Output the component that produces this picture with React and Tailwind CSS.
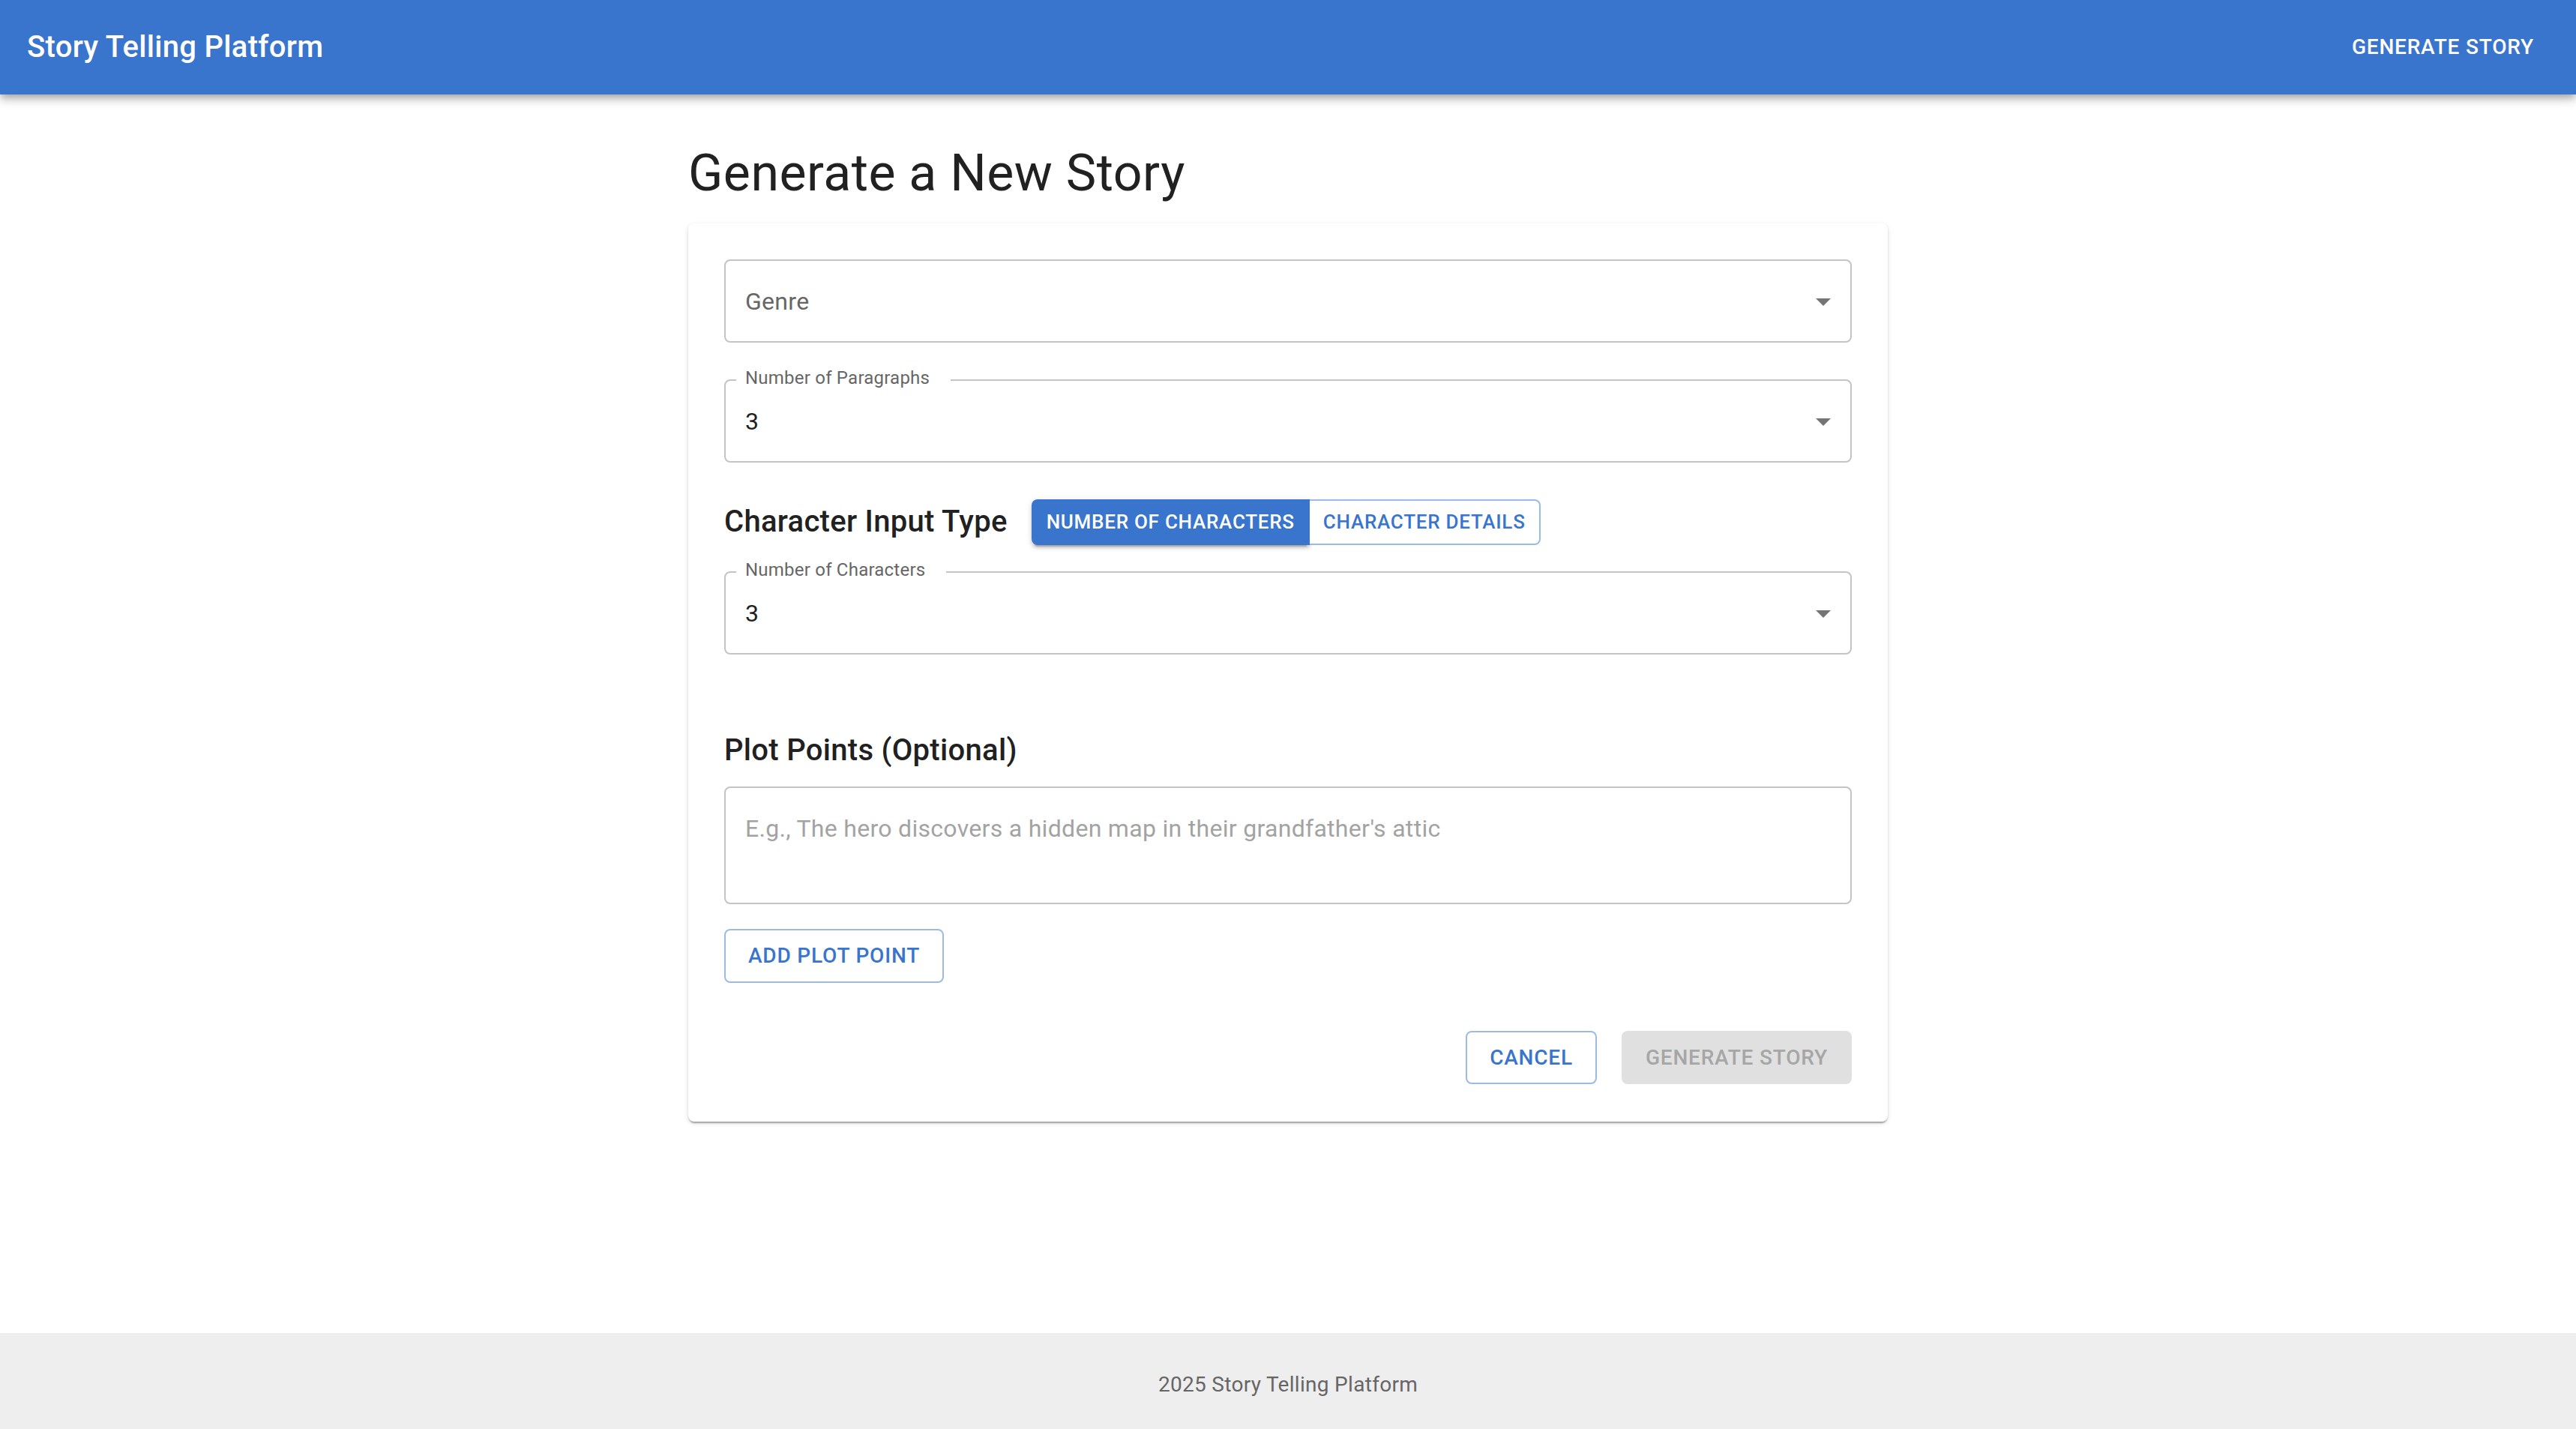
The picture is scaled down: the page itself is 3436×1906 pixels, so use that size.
import React from 'react';

const BLUE = 'text-[#3975cc]';

const ArrowDrop = () => (
  <svg width="48" height="48" viewBox="0 0 24 24" className="shrink-0">
    <path d="M7 10l5 5 5-5z" fill="#757575" />
  </svg>
);

const SelectField = ({ label, value, placeholder }) => (
  <div className="relative h-[111px] border-2 border-[#c4c4c4] rounded-[8px] flex items-center justify-between pl-[26px] pr-[12px]">
    {label && (
      <span className="absolute left-[14px] top-[-16px] bg-white pl-[12px] pr-[28px] text-[24px] leading-[24px] tracking-[0.22px] text-[#666666]">
        {label}
      </span>
    )}
    <span className={value ? 'text-[32px] tracking-[0.3px] text-[#212121]' : 'text-[32px] tracking-[0.3px] text-[#666666]'}>
      {value || placeholder}
    </span>
    <ArrowDrop />
  </div>
);

const App = () => {
  return (
    <div className="min-h-screen flex flex-col bg-white font-['Roboto',sans-serif]">
      <header className="h-[126px] bg-[#3975cc] flex items-center justify-between pl-[36px] pr-[40px] shadow-[0_4px_8px_-2px_rgba(0,0,0,0.2),0_8px_10px_0_rgba(0,0,0,0.14),0_2px_20px_0_rgba(0,0,0,0.12)] relative z-10">
        <h1 className="text-[40px] leading-[64px] font-medium tracking-[0.3px] text-white">Story Telling Platform</h1>
        <button className="px-[16px] py-[12px] text-[28px] leading-[48px] font-medium uppercase tracking-[0.8px] text-white">
          Generate Story
        </button>
      </header>

      <main className="flex-1">
        <div className="w-[1600px] mx-auto pt-[63px]">
          <h2 className="text-[68px] leading-[84px] tracking-[0.5px] text-[#212121] mb-[25px]">Generate a New Story</h2>

          <div className="bg-white rounded-[8px] px-[48px] pt-[48px] pb-[50px] shadow-[0_4px_2px_-2px_rgba(0,0,0,0.2),0_2px_2px_0_rgba(0,0,0,0.14),0_2px_6px_0_rgba(0,0,0,0.12)]">
            <SelectField placeholder="Genre" />

            <div className="mt-[49px]">
              <SelectField label="Number of Paragraphs" value="3" />
            </div>

            <div className="mt-[47px] h-[64px] flex items-center gap-[32px]">
              <h3 className="text-[40px] leading-[64px] font-medium tracking-[0.3px] text-[#212121]">Character Input Type</h3>
              <div className="flex">
                <button className="h-[61px] px-[20px] rounded-l-[8px] bg-[#3975cc] text-white text-[26px] font-medium uppercase tracking-[0.74px] shadow-[0_6px_2px_-4px_rgba(0,0,0,0.2),0_4px_4px_0_rgba(0,0,0,0.14),0_2px_10px_0_rgba(0,0,0,0.12)]">
                  Number of Characters
                </button>
                <button className={`h-[61px] px-[18px] rounded-r-[8px] border-2 border-l-0 border-[#9cbae6] bg-white ${BLUE} text-[26px] font-medium uppercase tracking-[0.74px]`}>
                  Character Details
                </button>
              </div>
            </div>

            <div className="mt-[34px]">
              <SelectField label="Number of Characters" value="3" />
            </div>

            <h3 className="mt-[96px] text-[40px] leading-[64px] font-medium tracking-[0.3px] text-[#212121]">Plot Points (Optional)</h3>

            <div className="mt-[16px] h-[157px] border-2 border-[#c4c4c4] rounded-[8px] pl-[26px] pt-[31px]">
              <p className="text-[32px] leading-[46px] tracking-[0.3px] text-[#a3a3a3]">
                E.g., The hero discovers a hidden map in their grandfather's attic
              </p>
            </div>

            <button className={`mt-[33px] h-[72px] px-[30px] rounded-[8px] border-2 border-[#9cbae6] ${BLUE} text-[28px] font-medium uppercase tracking-[0.8px]`}>
              Add Plot Point
            </button>

            <div className="mt-[64px] flex justify-end gap-[33px]">
              <button className={`h-[71px] px-[30px] rounded-[8px] border-2 border-[#9cbae6] ${BLUE} text-[28px] font-medium uppercase tracking-[0.8px]`}>
                Cancel
              </button>
              <button className="h-[71px] px-[32px] rounded-[8px] bg-[#e0e0e0] text-[#a6a6a6] text-[28px] font-medium uppercase tracking-[0.8px]">
                Generate Story
              </button>
            </div>
          </div>
        </div>
      </main>

      <footer className="h-[128px] bg-[#eeeeee] flex items-center justify-center pt-[9px]">
        <p className="text-[28px] leading-[40px] tracking-[0.3px] text-[#666666]">2025 Story Telling Platform</p>
      </footer>
    </div>
  );
};

export default App;
